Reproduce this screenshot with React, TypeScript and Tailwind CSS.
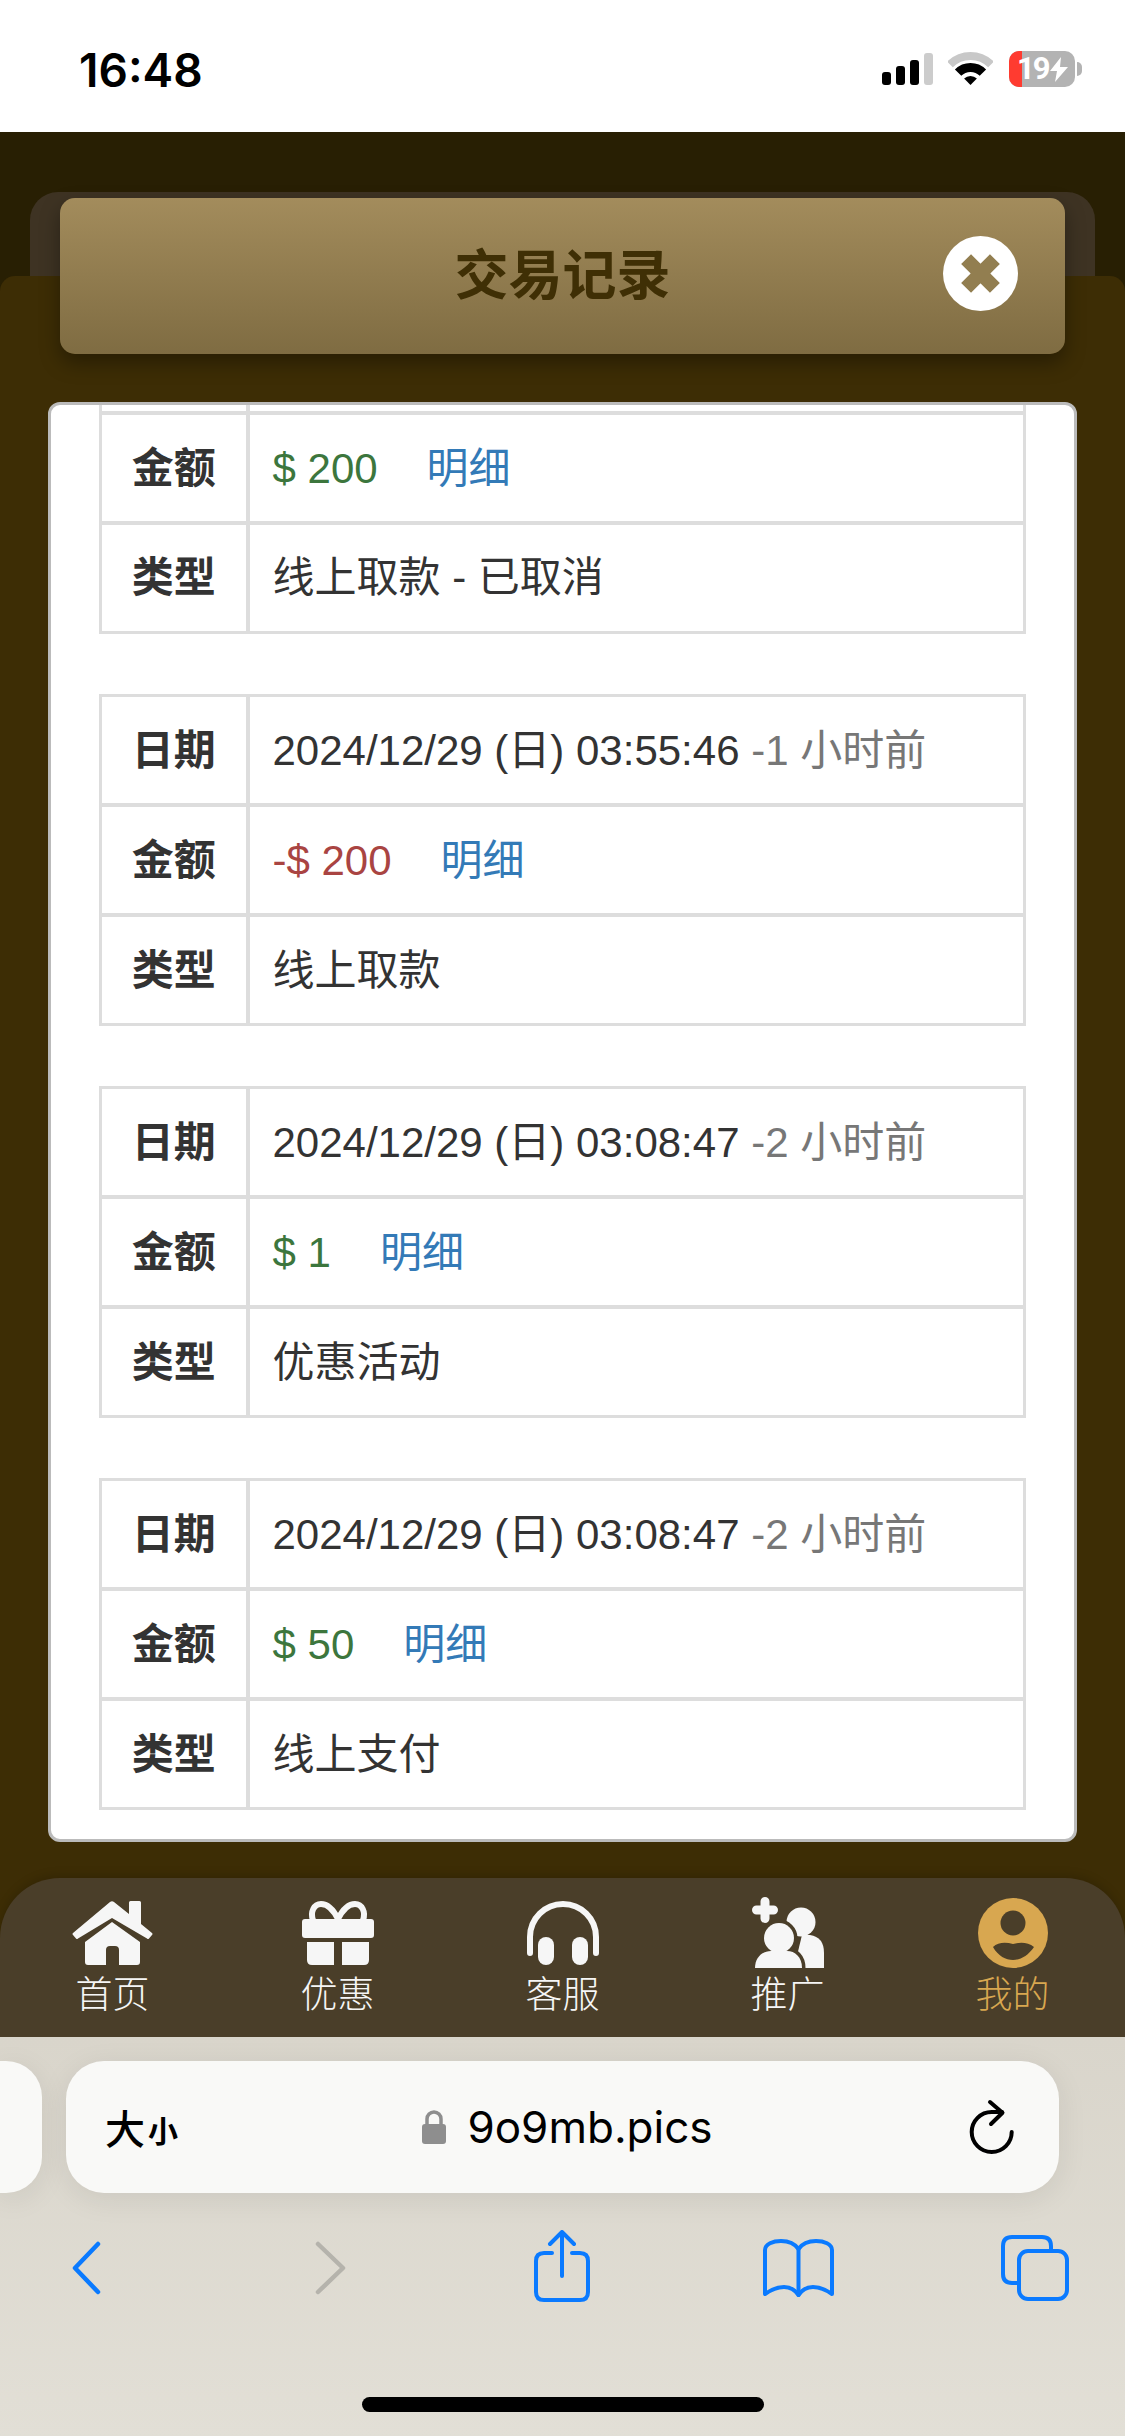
import type { ReactNode } from "react";

type Tx = {
  date?: string;
  ago?: string;
  amount: string;
  tone: "in" | "out";
  kind: string;
};

const records: Tx[] = [
  { amount: "$ 200", tone: "in", kind: "线上取款 - 已取消" },
  { date: "2024/12/29 (日) 03:55:46", ago: "-1 小时前", amount: "-$ 200", tone: "out", kind: "线上取款" },
  { date: "2024/12/29 (日) 03:08:47", ago: "-2 小时前", amount: "$ 1", tone: "in", kind: "优惠活动" },
  { date: "2024/12/29 (日) 03:08:47", ago: "-2 小时前", amount: "$ 50", tone: "in", kind: "线上支付" },
];

function Row({ label, children }: { label?: string; children?: ReactNode }) {
  return (
    <tr className="h-[109.7px]">
      <th className="w-[147px] border-[4px] border-l-[3px] border-[#ddd] p-0 text-center text-[42px] font-bold text-[#333]">{label}</th>
      <td className="border-[4px] border-r-[3px] border-[#ddd] py-0 pr-0 pl-[23px] text-[42px] whitespace-nowrap text-[#333]">{children}</td>
    </tr>
  );
}

function HomeIcon() {
  return (
    <svg width="81" height="64" viewBox="0 0 81 64" fill="#f6f6f6">
      <path d="M38 1 Q40 -0.5 42 1 L57 13 V1.5 Q57 0 58.5 0 H67.5 Q69 0 69 1.5 V23 L80 32 Q81 33 80 34 L77 37.5 Q76 38.5 75 37.5 L40 17 L6 37.5 Q5 38.5 4 37.5 L1 34 Q0 33 1 32 Z" />
      <path d="M40 21 L68 41 V61 Q68 64 65 64 H47 V49 Q47 45 43 45 H38 Q34 45 34 49 V64 H16 Q13 64 13 61 V41 Z" />
    </svg>
  );
}

function GiftIcon() {
  return (
    <svg width="72" height="64" viewBox="0 0 72 64" fill="#f6f6f6">
      <path d="M36 18 C31 8 26 3 19 3 C12 3 8 11 11 19 M36 18 C41 8 46 3 53 3 C60 3 64 11 61 19" fill="none" stroke="#f6f6f6" strokeWidth="6" />
      <rect x="0" y="18" width="72" height="19" rx="3" />
      <path d="M5 41 H32 V64 H10 Q5 64 5 59 Z" />
      <path d="M40 41 H67 V59 Q67 64 62 64 H40 Z" />
    </svg>
  );
}

function HeadsetIcon() {
  return (
    <svg width="72" height="64" viewBox="0 0 72 64" fill="#f6f6f6">
      <path d="M3 52 V36 A33 33 0 0 1 69 36 V52" fill="none" stroke="#f6f6f6" strokeWidth="6" strokeLinecap="round" />
      <rect x="11" y="36" width="16" height="28" rx="8" />
      <rect x="45" y="36" width="16" height="28" rx="8" />
    </svg>
  );
}

function PromoteIcon() {
  const head = <circle cx="27" cy="41" r="15" />;
  const body = <path d="M3 71 C3 60 11 54 19 54 H35 C43 54 50 60 50 71 Z" />;
  return (
    <svg width="72" height="71" viewBox="0 0 72 71" fill="#f6f6f6">
      <path d="M13 4.5 V21.5 M4.5 13 H21.5" fill="none" stroke="#f6f6f6" strokeWidth="9" strokeLinecap="round" />
      <circle cx="49" cy="25" r="14.5" />
      <path d="M50 38 H58 Q72 40 72 56 V71 H42 Z" />
      {/* front figure gets a cut-out halo against the one behind it */}
      <g fill="#4a3e29" stroke="#4a3e29" strokeWidth="7">
        {head}
        {body}
      </g>
      {head}
      {body}
    </svg>
  );
}

function UserIcon() {
  return (
    <svg width="70" height="70" viewBox="0 0 70 70">
      <circle cx="35" cy="35" r="35" fill="#d8a750" />
      <circle cx="35" cy="25" r="12.5" fill="#4a3e29" />
      <path d="M15 49 C20 44 28 44 35 46 C42 44 50 44 56 49 C50 58 42 62 35 62 C28 62 20 58 15 49 Z" fill="#4a3e29" />
    </svg>
  );
}

const tabs = [
  { label: "首页", icon: <HomeIcon /> },
  { label: "优惠", icon: <GiftIcon /> },
  { label: "客服", icon: <HeadsetIcon /> },
  { label: "推广", icon: <PromoteIcon /> },
  { label: "我的", icon: <UserIcon />, active: true },
];

function StatusBar() {
  return (
    <div className="flex h-[132px] shrink-0 items-start bg-white">
      <span className="mt-[43px] ml-[79px] text-[46px] leading-[54px] font-semibold text-black [font-family:Inter,sans-serif]">16:48</span>
      <div className="mt-[53px] ml-auto flex h-[32px] items-end gap-[5px]">
        <i className="h-[13px] w-[9px] rounded-[3px] bg-black" />
        <i className="h-[19px] w-[9px] rounded-[3px] bg-black" />
        <i className="h-[25px] w-[9px] rounded-[3px] bg-black" />
        <i className="h-[32px] w-[9px] rounded-[3px] bg-[#ccc]" />
      </div>
      <svg className="mt-[52px] ml-[15px]" width="45" height="33" viewBox="0 0 45 33">
        <path d="M2 12.5 A29 29 0 0 1 43 12.5" fill="none" stroke="#c8c8c8" strokeWidth="8" />
        <path d="M10.1 20.6 A17.5 17.5 0 0 1 34.9 20.6" fill="none" stroke="#000" strokeWidth="9" />
        <path d="M16.1 26.6 A9 9 0 0 1 28.9 26.6 L22.5 33 Z" fill="#000" />
      </svg>
      <div className="relative mt-[51px] ml-[16px] h-[36px] w-[66px] overflow-hidden rounded-[10px] bg-[#b3b3b3]">
        <div className="h-full w-[13px] bg-[#ff3b30]" />
        <span className="absolute top-0 left-[8px] text-[31px] leading-[36px] font-bold tracking-[-2px] text-white [font-family:Roboto,sans-serif]">19</span>
        <svg className="absolute top-[6px] left-[41px]" width="18" height="25" viewBox="0 0 18 25" fill="#fff">
          <path d="M11 0 L0 14 H7 L5 25 L18 10 H10 Z" />
        </svg>
      </div>
      <div className="mt-[62px] mr-[43px] ml-[2px] h-[14px] w-[5px] rounded-r-full bg-[#b3b3b3]" />
    </div>
  );
}

function AddressBar() {
  return (
    <div className="flex h-[132px] gap-[24px]">
      <div className="w-[42px] rounded-r-[36px] bg-[#f9f9f7] shadow-[0_6px_30px_rgba(0,0,0,0.08)]" />
      <div className="relative flex w-[993px] items-center justify-center rounded-[38px] bg-[#f9f9f7] pl-[10px] text-black shadow-[0_6px_30px_rgba(0,0,0,0.08)]">
        <span className="absolute top-[42px] left-[39px] flex items-end text-[40px] leading-[48px] font-medium [font-family:'Noto_Sans_CJK_SC',sans-serif]">
          大<span className="ml-[3px] text-[30px] leading-[44px] font-bold">小</span>
        </span>
        <svg className="mr-[21px]" width="24" height="34" viewBox="0 0 24 34" fill="#8e8e8e">
          <path d="M5 15 V9 A7 7 0 0 1 19 9 V15" fill="none" stroke="#8e8e8e" strokeWidth="3.5" />
          <rect x="0" y="14" width="24" height="20" rx="3" />
        </svg>
        <span className="text-[44px] leading-[52px] [font-family:Inter,sans-serif]">9o9mb.pics</span>
        <svg className="absolute top-[37px] right-[42px]" width="50" height="60" viewBox="0 0 50 60" fill="none" stroke="#000" strokeWidth="4" strokeLinecap="round" strokeLinejoin="round">
          <path d="M44.7 34 A20 20 0 1 1 24.7 14 H35" />
          <path d="M23 4 L35.5 14.7 L24 26" />
        </svg>
      </div>
    </div>
  );
}

function ToolBar() {
  return (
    <div className="mt-[39px] flex h-[72px] items-center">
      <svg className="ml-[72px]" width="29" height="54" viewBox="0 0 29 54" fill="none" stroke="#0a7aff" strokeWidth="4.5" strokeLinecap="round" strokeLinejoin="round">
        <path d="M26 3 L3 27 L26 51" />
      </svg>
      <svg className="ml-[214px]" width="31" height="54" viewBox="0 0 31 54" fill="none" stroke="#b5b3ac" strokeWidth="4.5" strokeLinecap="round" strokeLinejoin="round">
        <path d="M3 3 L28 27 L3 51" />
      </svg>
      <svg className="-mt-1 ml-[188px]" width="56" height="72" viewBox="0 0 56 72" fill="none" stroke="#0a7aff" strokeWidth="4" strokeLinecap="round" strokeLinejoin="round">
        <path d="M18 23 H10 Q2 23 2 31 V62 Q2 70 10 70 H46 Q54 70 54 62 V31 Q54 23 46 23 H38" />
        <path d="M28 46 V2 M16 14 L28 2 L40 14" />
      </svg>
      <svg className="ml-[173px]" width="71" height="59" viewBox="0 0 71 59" fill="none" stroke="#0a7aff" strokeWidth="4" strokeLinecap="round" strokeLinejoin="round">
        <path d="M2 55 V11 C2 5 10 2 18 2 C26 2 32 5 35.5 10 C39 5 45 2 53 2 C61 2 69 5 69 11 V55 C62 50 56 48 50 48 C44 48 39 51 35.5 56 C32 51 27 48 21 48 C15 48 9 50 2 55 Z" />
        <path d="M35.5 10 V56" />
      </svg>
      <svg className="ml-[167px]" width="68" height="66" viewBox="0 0 68 66" fill="none" stroke="#0a7aff" strokeWidth="4" strokeLinejoin="round">
        <rect x="18" y="16" width="48" height="48" rx="9" />
        <path d="M50 14 V11 Q50 2 41 2 H11 Q2 2 2 11 V39 Q2 48 11 48 H16" />
      </svg>
    </div>
  );
}

export default function App() {
  return (
    <div className="flex h-[2436px] w-[1125px] flex-col overflow-hidden bg-[#281f03] [font-family:'Liberation_Sans','Noto_Sans_CJK_SC',sans-serif]">
      <StatusBar />

      <main className="flex min-h-0 flex-1 flex-col pt-[60px]">
        <div className="mx-[30px] h-[84px] shrink-0 rounded-t-[28px] bg-[#3e3323] px-[30px] pt-[6px]">
          <header className="relative z-10 flex h-[156px] items-center justify-center rounded-[15px] bg-linear-to-b from-[#a38c5c] to-[#7f6c42] shadow-[0_9px_20px_rgba(0,0,0,0.35)]">
            <h1 className="text-[54px] leading-none font-bold text-[#3f2f05]">交易记录</h1>
            <svg className="absolute top-[38px] right-[47px]" width="75" height="75" viewBox="-37.5 -37.5 75 75">
              <circle r="37.5" fill="#fff" />
              <path d="M-14.4 -14.4 L14.4 14.4 M14.4 -14.4 L-14.4 14.4" stroke="#927e50" strokeWidth="14" />
            </svg>
          </header>
        </div>

        <div className="flex min-h-0 flex-1 flex-col rounded-t-[15px] bg-[#3d2d05] pt-[126px]">
          <section className="mx-[48px] h-[1440px] shrink-0 overflow-hidden rounded-[12px] border-[3px] border-[#bbb] bg-white px-[48px]">
            {records.map((r, i) => (
              <table
                key={i}
                className={`mb-[60px] w-full border-collapse [&_tr:first-child>*]:border-t-[3px] [&_tr:last-child>*]:border-b-[3px] ${i === 0 ? "-mt-[103px]" : ""}`}
              >
                <tbody>
                  {/* the first entry is scrolled up, only its lower rows are in view */}
                  <Row label={r.date ? "日期" : undefined}>
                    {r.date}
                    {r.ago ? <span className="text-[#777]"> {r.ago}</span> : null}
                  </Row>
                  <Row label="金额">
                    <span className={r.tone === "in" ? "text-[#3c763d]" : "text-[#a94442]"}>{r.amount}</span>
                    <a className="ml-[49px] text-[#337ab7]">明细</a>
                  </Row>
                  <Row label="类型">{r.kind}</Row>
                </tbody>
              </table>
            ))}
          </section>

          <nav className="mt-[36px] grid flex-1 grid-cols-5 rounded-t-[60px] bg-[#4a3e29] pt-[19px] shadow-[0_-3px_10px_rgba(0,0,0,0.15)]">
            {tabs.map((t) => (
              <div key={t.label} className="flex flex-col items-center">
                <div className="flex h-[71px] items-center">{t.icon}</div>
                <span className={`mt-[10px] text-[37px] leading-[36px] font-light ${t.active ? "text-[#d8a750]" : "text-[#f6f6f6]"}`}>{t.label}</span>
              </div>
            ))}
          </nav>
        </div>
      </main>

      <footer className="h-[399px] shrink-0 bg-linear-to-b from-[#d9d5cb] to-[#e2dfd6] pt-[24px]">
        <AddressBar />
        <ToolBar />
        <div className="mt-[93px] ml-[362px] h-[15px] w-[402px] rounded-full bg-black" />
      </footer>
    </div>
  );
}
